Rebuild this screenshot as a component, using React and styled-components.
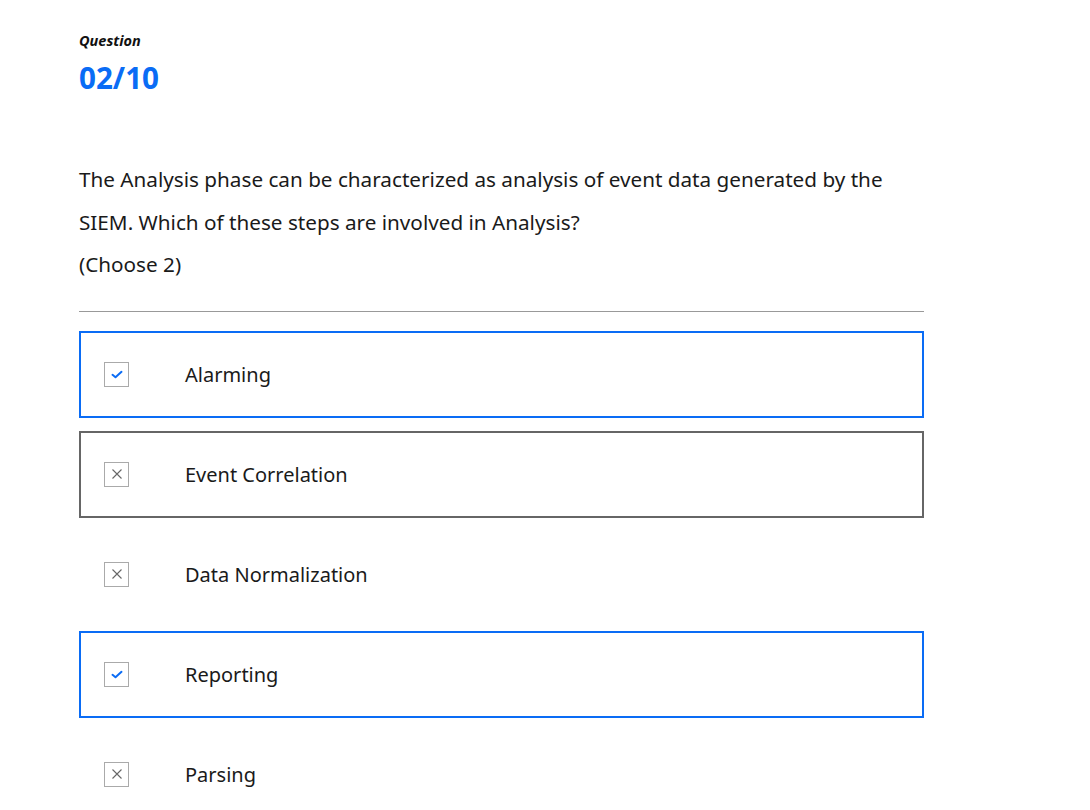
import React from 'react'
import styled, { createGlobalStyle } from 'styled-components'

const options = [
  { label: 'Alarming', state: 'correct' },
  { label: 'Event Correlation', state: 'wrong' },
  { label: 'Data Normalization', state: 'none' },
  { label: 'Reporting', state: 'correct' },
  { label: 'Parsing', state: 'none' },
]

function Check() {
  return (
    <svg width="12" height="9" viewBox="0 0 12 9">
      <path d="M1.5 4.8 L4.5 7.2 L10.5 1.8" fill="none" stroke="#0a6cf5" strokeWidth="2" strokeLinecap="round" strokeLinejoin="round" />
    </svg>
  )
}

function Cross() {
  return (
    <svg width="12" height="12" viewBox="0 0 12 12">
      <path d="M1.5 1.5 L10.5 10.5 M10.5 1.5 L1.5 10.5" fill="none" stroke="#666" strokeWidth="1.1" />
    </svg>
  )
}

function App() {
  return (
    <>
      <GlobalStyle />
      <Page>
        <Label>Question</Label>
        <Counter>02/10</Counter>
        <Prompt>
          The Analysis phase can be characterized as analysis of event data generated by the
          SIEM. Which of these steps are involved in Analysis?
        </Prompt>
        <Prompt>(Choose 2)</Prompt>
        <Divider />
        <List>
          {options.map((o) => (
            <Option key={o.label} $state={o.state}>
              <Box>{o.state === 'correct' ? <Check /> : <Cross />}</Box>
              <OptionText>{o.label}</OptionText>
            </Option>
          ))}
        </List>
      </Page>
    </>
  )
}

export default App

const GlobalStyle = createGlobalStyle`
body {
  margin: 0;
  background: #fff;
  font-family: "Noto Sans", "Open Sans", sans-serif;
  color: #1a1a1a;
}
`;

const Page = styled.div`
width: 845px;
padding: 30px 0 0 79px;
`;

const Label = styled.div`
font-size: 14.5px;
font-style: italic;
font-weight: 700;
line-height: 20px;
color: #111;
`;

const Counter = styled.div`
margin-top: 10px;
font-size: 29.6px;
font-weight: 700;
line-height: 36px;
color: #0a6cf5;
margin-bottom: 62px;
`;

const Prompt = styled.p`
margin: 0;
font-size: 20.7px;
line-height: 42.5px;
color: #1a1a1a;
`;

const Divider = styled.hr`
margin: 25px 0 19px;
border: none;
border-top: 1px solid #999;
`;

const List = styled.div`
display: flex;
flex-direction: column;
gap: 13px;
`;

const Option = styled.div`
height: 87px;
box-sizing: border-box;
display: flex;
align-items: center;
padding-left: 23px;
border: 2px solid ${(p) =>
  p.$state === 'correct' ? '#0a6cf5' : p.$state === 'wrong' ? '#666' : 'transparent'};
`;

const Box = styled.div`
width: 25px;
height: 25px;
box-sizing: border-box;
border: 1px solid #aaa;
display: flex;
align-items: center;
justify-content: center;
`;

const OptionText = styled.span`
margin-left: 56px;
font-size: 20px;
color: #1a1a1a;
`;
